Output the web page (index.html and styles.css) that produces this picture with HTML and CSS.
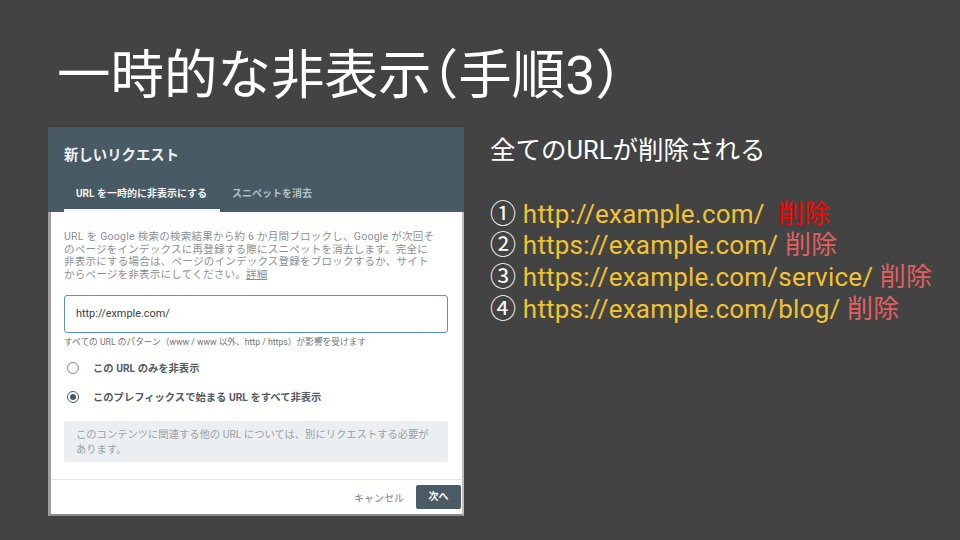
FILE: index.html
```html
<!DOCTYPE html>
<html lang="ja">
<head>
<meta charset="utf-8">
<title>一時的な非表示（手順3）</title>
<link rel="stylesheet" href="styles.css">
</head>
<body>
<div class="slide">
  <h1 class="title">一時的な非表示<span class="paren">（</span>手順3<span class="paren">）</span></h1>
  <div class="row">
    <div class="dialog">
      <div class="dlg-head">
        <div class="dlg-title">新しいリクエスト</div>
        <div class="tabs">
          <div class="tab active">URL を一時的に非表示にする</div>
          <div class="tab">スニペットを消去</div>
        </div>
      </div>
      <div class="dlg-main">
        <div class="dlg-body">
          <p class="desc">URL を Google 検索の検索結果から約 6 か月間ブロックし、Google が次回そ<br>のページをインデックスに再登録する際にスニペットを消去します。完全に<br>非表示にする場合は、ページのインデックス登録をブロックするか、サイト<br>からページを非表示にしてください。<span class="link">詳細</span></p>
          <div class="input">http://exmple.com/</div>
          <div class="helper">すべての URL のパターン（www / www 以外、http / https）が影響を受けます</div>
          <div class="radios">
            <div class="radio-row"><span class="radio"></span><span class="radio-label">この URL のみを非表示</span></div>
            <div class="radio-row"><span class="radio checked"></span><span class="radio-label">このプレフィックスで始まる URL をすべて非表示</span></div>
          </div>
          <div class="info">このコンテンツに関連する他の URL については、別にリクエストする必要が<br>あります。</div>
        </div>
        <div class="dlg-foot">
          <span class="cancel">キャンセル</span>
          <span class="next">次へ</span>
        </div>
      </div>
    </div>
    <div class="notes">
      <div class="note-head">全てのURLが削除される</div>
      <div class="blank">&nbsp;</div>
      <div class="item"><span class="num">①</span> <span class="url">http://example.com/</span>&nbsp; <span class="del strong">削除</span></div>
      <div class="item"><span class="num">②</span> <span class="url">https://example.com/</span> <span class="del">削除</span></div>
      <div class="item"><span class="num">③</span> <span class="url">https://example.com/service/</span> <span class="del">削除</span></div>
      <div class="item"><span class="num">④</span> <span class="url">https://example.com/blog/</span> <span class="del">削除</span></div>
    </div>
  </div>
</div>
</body>
</html>
```

FILE: styles.css
```css
html, body {
  margin: 0;
  padding: 0;
  background: #434343;
}
.slide {
  width: 960px;
  height: 540px;
  box-sizing: border-box;
  padding-top: 41px;
  font-family: Roboto, "Noto Sans CJK JP", sans-serif;
  overflow: hidden;
}
.title {
  margin: 0 0 0 57px;
  font-size: 53.5px;
  font-weight: 400;
  line-height: 60px;
  color: #ffffff;
  white-space: nowrap;
}
.paren {
  font-feature-settings: "halt";
  font-family: "Noto Sans CJK JP", sans-serif;
}
.row {
  display: flex;
  margin-top: 21px;
}
.dialog {
  width: 416px;
  height: 389px;
  margin-left: 48px;
  display: flex;
  flex-direction: column;
  background: #ffffff;
  font-family: Roboto, "Noto Sans CJK JP", sans-serif;
}
.dlg-head {
  background: #485a64;
  padding: 20px 0 0 16px;
  height: 85px;
  box-sizing: border-box;
}
.dlg-title {
  font-size: 14.4px;
  font-weight: 700;
  line-height: 18px;
  color: #eef1f3;
}
.tabs {
  display: flex;
  margin-top: 13px;
}
.tab {
  padding: 0 11px 0 12px;
  height: 34px;
  box-sizing: border-box;
  line-height: 31px;
  font-size: 10px;
  font-weight: 700;
  color: #b4c0c7;
  border-bottom: 3px solid transparent;
}
.tab.active {
  color: #f2f4f5;
  border-bottom-color: #f4f8fb;
  width: 156px;
}
.dlg-main {
  flex: 1;
  display: flex;
  flex-direction: column;
  border-left: 3px solid #9e9e9e;
  border-right: 2px solid #bdbdbd;
  border-bottom: 2px solid #8c8c8c;
}
.dlg-body {
  flex: 1;
  padding: 0 14px 0 13px;
  border-bottom: 1px solid #e4e4e4;
}
.desc {
  margin: 19px 0 0;
  font-size: 10.5px;
  letter-spacing: 0.25px;
  line-height: 12.5px;
  color: #8a8f94;
  white-space: nowrap;
}
.link {
  text-decoration: underline;
}
.input {
  margin-top: 14px;
  height: 38px;
  box-sizing: border-box;
  border: 1px solid #5a8fd3;
  border-radius: 3px;
  padding-left: 11px;
  line-height: 36px;
  font-size: 10.9px;
  color: #3c4043;
}
.helper {
  margin-top: 4px;
  font-size: 8.7px;
  line-height: 10px;
  color: #6f7479;
  white-space: nowrap;
}
.radios {
  margin-top: 6px;
}
.radio-row {
  display: flex;
  align-items: center;
  height: 29px;
}
.radio {
  width: 12px;
  height: 12px;
  box-sizing: border-box;
  border: 1.5px solid #80868b;
  border-radius: 50%;
  margin-left: 3px;
  margin-right: 14px;
  display: flex;
  align-items: center;
  justify-content: center;
}
.radio.checked {
  border-color: #4f5b62;
}
.radio.checked::after {
  content: "";
  width: 6px;
  height: 6px;
  border-radius: 50%;
  background: #4a5a63;
}
.radio-label {
  font-size: 10.3px;
  font-weight: 700;
  color: #555a5f;
}
.info {
  margin-top: 10px;
  background: #eceff1;
  border-radius: 2px;
  padding: 6px 12px 5px;
  font-size: 10.3px;
  line-height: 15px;
  color: #9aa0a5;
  white-space: nowrap;
}
.dlg-foot {
  height: 34px;
  display: flex;
  align-items: center;
  justify-content: flex-end;
  padding-right: 1px;
}
.cancel {
  font-size: 10px;
  color: #7a7f84;
  margin-right: 12px;
}
.next {
  width: 45px;
  height: 24px;
  line-height: 24px;
  text-align: center;
  background: #4a5b65;
  color: #ffffff;
  font-size: 10px;
  font-weight: 700;
  border-radius: 2px;
}
.notes {
  margin-left: 26px;
  padding-top: 8px;
  font-size: 26px;
  letter-spacing: 0.2px;
  line-height: 31.75px;
  color: #ffffff;
  white-space: nowrap;
}
.note-head {
  font-size: 25.5px;
  letter-spacing: 0;
}
.url {
  color: #f1c232;
}
.del {
  color: #e06060;
}
.del.strong {
  color: #ff0000;
}
```
